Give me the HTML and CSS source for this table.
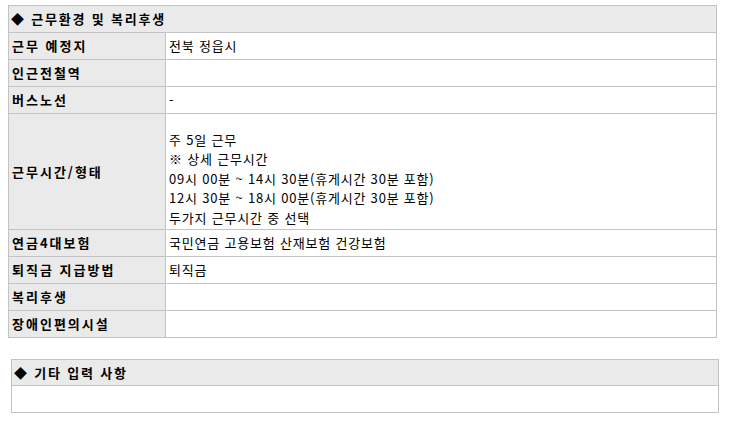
FILE: index.html
```html
<!DOCTYPE html>
<html lang="ko">
<head>
<meta charset="utf-8">
<link rel="stylesheet" href="styles.css">
</head>
<body>
<table class="info info-main">
  <colgroup><col class="col-label"><col></colgroup>
  <tr><th class="head" colspan="2">◆ 근무환경 및 복리후생</th></tr>
  <tr><th class="label">근무 예정지</th><td class="value">전북 정읍시</td></tr>
  <tr><th class="label">인근전철역</th><td class="value"></td></tr>
  <tr><th class="label">버스노선</th><td class="value">-</td></tr>
  <tr class="tall"><th class="label">근무시간/형태</th><td class="value multi">주 5일 근무<br>※ 상세 근무시간<br>09시 00분 ~ 14시 30분(휴게시간 30분 포함)<br>12시 30분 ~ 18시 00분(휴게시간 30분 포함)<br>두가지 근무시간 중 선택</td></tr>
  <tr><th class="label">연금4대보험</th><td class="value">국민연금 고용보험 산재보험 건강보험</td></tr>
  <tr><th class="label">퇴직금 지급방법</th><td class="value">퇴직금</td></tr>
  <tr><th class="label">복리후생</th><td class="value"></td></tr>
  <tr><th class="label">장애인편의시설</th><td class="value"></td></tr>
</table>
<table class="info info-extra">
  <tr><th class="head head-short">◆ 기타 입력 사항</th></tr>
  <tr><td class="value"></td></tr>
</table>
</body>
</html>
```
FILE: styles.css
```css
html, body {
  margin: 0;
  padding: 0;
  background: #fff;
}
body {
  padding: 5px 0 0 8px;
  font-family: "Noto Sans CJK KR", "Noto Sans", sans-serif;
  font-size: 13px;
  letter-spacing: 0.8px;
  color: #000;
}
.info {
  border-collapse: collapse;
  table-layout: fixed;
}
.col-label {
  width: 157px;
}
.info th, .info td {
  border: 1px solid #c3c3c3;
  height: 26px;
  padding: 0 0 0 3px;
  vertical-align: middle;
  text-align: left;
  line-height: 16px;
}
.info-main {
  width: 709px;
}
.info-extra {
  width: 708px;
  margin: 21px 0 0 3px;
}
.info .head {
  background: #eaeaea;
  font-weight: bold;
  letter-spacing: 1.8px;
  padding-left: 2px;
}
.info .head-short {
  height: 25px;
}
.info .label {
  background: #eaeaea;
  font-weight: bold;
  letter-spacing: 2px;
}
.info .value {
  background: #fff;
  font-weight: normal;
}
.info tr.tall th {
  height: 115px;
}
.info tr.tall td.multi {
  height: 101px;
  line-height: 19.5px;
  padding-top: 14px;
}
```
